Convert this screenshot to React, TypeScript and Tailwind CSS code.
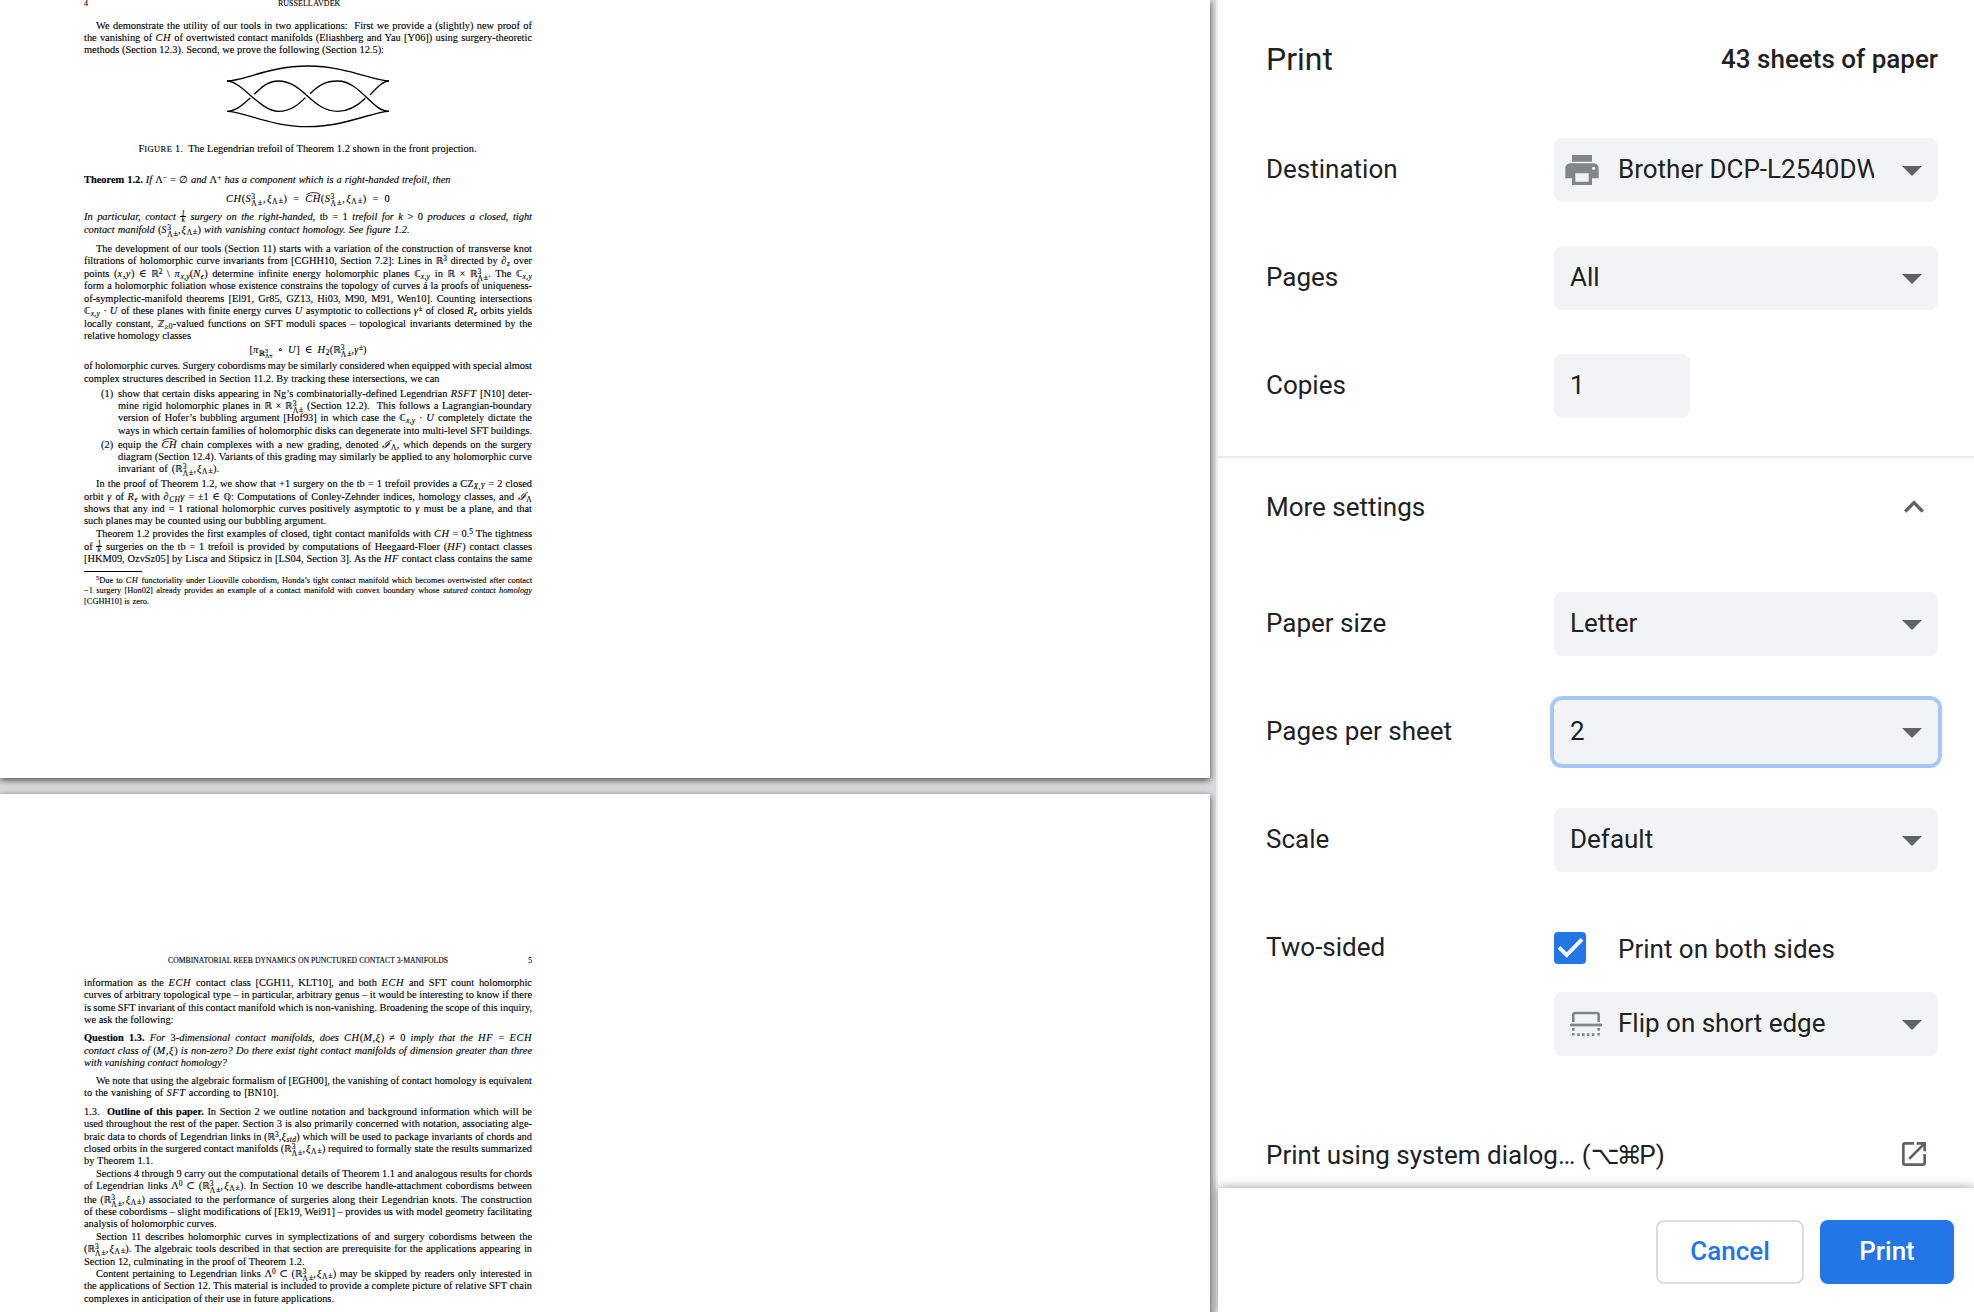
import React from 'react';
import { MdExpandLess, MdLaunch, MdPrint } from 'react-icons/md';

type Kids = { children?: React.ReactNode };

/* ---------- Typeset document ---------- */

// One typeset line, justified to its box; h is the distance to the next baseline.
function L({ children, h = 'h-[12px]', w = 'w-[448px]', c = '' }: Kids & { h?: string; w?: string; c?: string }) {
  return (
    <p className={`leading-[12px] whitespace-nowrap text-justify [text-align-last:justify] ${h} ${w} ${c}`}>{children}</p>
  );
}

const I = ({ children }: Kids) => <i className="tracking-[0.6px]">{children}</i>;
const R = ({ children }: Kids) => <span className="not-italic">{children}</span>;
const Sub = ({ children }: Kids) => (
  <span className="align-[-1.5px] text-[7.5px] leading-[6px] tracking-[0.3px]">{children}</span>
);
const Sup = ({ children }: Kids) => <span className="align-[3.5px] text-[7.5px] leading-[6px] not-italic">{children}</span>;
const BB = ({ children }: Kids) => <span className="font-['DejaVu_Sans'] text-[9.5px] leading-[9px] not-italic">{children}</span>;
const LamPm = () => (
  <>
    Λ<span className="ml-[0.7px] align-[1px] text-[8.5px] leading-[5px]">±</span>
  </>
);
// Superscript 3 set directly above a Λ± subscript.
const Stack = () => (
  <span className="inline-flex flex-col align-[3.5px] text-[7.5px] leading-[6px] not-italic">
    <span className="h-[6px]">3</span>
    <span className="h-[6px]">
      <LamPm />
    </span>
  </span>
);
const Frac = () => (
  <span className="inline-flex flex-col items-center align-[4px] text-[7.5px] leading-[6px]">
    <span className="border-b border-black px-px leading-[5px]">1</span>
    <i className="leading-[6px]">k</i>
  </span>
);
const XiL = () => (
  <>
    <I>ξ</I>
    <span className="align-[-1.5px] text-[7.5px] leading-[6px] not-italic">
      <LamPm />
    </span>
  </>
);
const RXi = () => (
  <R>
    (<BB>ℝ</BB>
    <Stack />,<span className="ml-px"><XiL /></span>)
  </R>
);
const SXi = () => (
  <R>
    (<I>S</I>
    <Stack />,<span className="ml-px"><XiL /></span>)
  </R>
);
const Hat = ({ children }: Kids) => (
  <span className="relative">
    <I>{children}</I>
    <svg className="absolute -top-[1px] left-[1px] h-[3px] w-[15px]" viewBox="0 0 15 3" fill="none">
      <path d="M0.5 2.6 Q7.5 -1.6 14.5 2.6" stroke="black" strokeWidth="0.8" />
    </svg>
  </span>
);
const Cxy = () => (
  <>
    <BB>ℂ</BB>
    <Sub>
      <i>x,y</i>
    </Sub>
  </>
);

function Trefoil() {
  return (
    <svg className="h-[65.3px] w-[164px]" viewBox="468 190 492 196" fill="none" stroke="black" strokeWidth="4">
      <path d="M471 244C520 244 600 199 714 199S910 244 957 244" />
      <path d="M471 335C520 335 600 381 714 381S910 335 957 335" />
      <path d="M471 244C515 244 570 335 625 335C665 335 690 310 706 294" />
      <path d="M471 335C500 335 520 312 541 295" />
      <path d="M553 284C575 262 595 244 625 244C700 244 725 335 803 335C845 335 870 312 886 296" />
      <path d="M720 282C745 258 765 244 803 244C870 244 905 335 957 335" />
      <path d="M900 286C925 260 940 244 957 244" />
    </svg>
  );
}

function PageFour() {
  return (
    <div className="-mt-[3px] flex flex-col">
      <div className="flex h-[23px] pt-px text-[8px]">
        <span className="w-[194px] leading-[12px]">4</span>
        <L w="w-[60px]">RUSSELL AVDEK</L>
      </div>
      <L c="pl-[12px]">We demonstrate the utility of our tools in two applications:&nbsp; First we provide a (slightly) new proof of</L>
      <L>the vanishing of <I>CH</I> of overtwisted contact manifolds (Eliashberg and Yau [Y06]) using surgery-theoretic</L>
      <L w="w-[300px]">methods (Section 12.3). Second, we prove the following (Section 12.5):</L>
      <div className="h-[87px] pt-[7px] pl-[142px]">
        <Trefoil />
      </div>
      <L h="h-[31px]" w="w-[338px]" c="ml-[54.5px]">
        F<span className="text-[8.5px] tracking-[0.4px]">IGURE</span> 1.&nbsp; The Legendrian trefoil of Theorem 1.2 shown in the front projection.
      </L>
      <L h="h-[19px]" w="w-[366.5px]" c="italic">
        <b className="not-italic">Theorem 1.2.</b> If <R>Λ<Sup>−</Sup> = ∅</R> and <R>Λ<Sup>+</Sup></R> has a component which is a right-handed trefoil, then
      </L>
      <L h="h-[18px]" w="w-[164px]" c="ml-[142px] tracking-[0.4px]">
        <I>CH</I><SXi /> = <Hat>CH</Hat><SXi /> = 0
      </L>
      <L h="h-[13px]" c="italic">
        In particular, contact <Frac /> surgery on the right-handed, <R>tb = 1</R> trefoil for k <R>&gt; 0</R> produces a closed, tight
      </L>
      <L h="h-[19px]" w="w-[325.5px]" c="italic">
        contact manifold <SXi /> with vanishing contact homology. See figure 1.2.
      </L>
      <L c="pl-[12px]">The development of our tools (Section 11) starts with a variation of the construction of transverse knot</L>
      <L h="h-[13px]">
        filtrations of holomorphic curve invariants from [CGHH10, Section 7.2]: Lines in <BB>ℝ</BB><Sup>3</Sup> directed by <I>∂</I><Sub><i>z</i></Sub> over
      </L>
      <L>
        points (<I>x,y</I>) ∈ <BB>ℝ</BB><Sup>2</Sup> \ <I>π</I><Sub><i>x,y</i></Sub>(<I>N</I><Sub><i>ϵ</i></Sub>) determine infinite energy holomorphic planes <Cxy /> in <BB>ℝ</BB> × <BB>ℝ</BB><Stack />. The <Cxy />
      </L>
      <L h="h-[13px]">form a holomorphic foliation whose existence constrains the topology of curves á la proofs of uniqueness-</L>
      <L>of-symplectic-manifold theorems [El91, Gr85, GZ13, Hi03, M90, M91, Wen10]. Counting intersections</L>
      <L h="h-[13px]">
        <Cxy /> · <I>U</I> of these planes with finite energy curves <I>U</I> asymptotic to collections <I>γ</I><Sup>±</Sup> of closed <I>R</I><Sub><i>ϵ</i></Sub> orbits yields
      </L>
      <L>
        locally constant, <BB>ℤ</BB><Sub>≥0</Sub>-valued functions on SFT moduli spaces – topological invariants determined by the
      </L>
      <L h="h-[14px]" w="w-[107px]">relative homology classes</L>
      <L h="h-[16px]" w="w-[117px]" c="ml-[165.5px]">
        [<I>π</I>
        <span className="align-[-3px] text-[7.5px] leading-[6px]">ℝ</span>
        <span className="inline-flex flex-col align-[0px] text-[6px] leading-[5px]"><span>3</span><span>Λ±</span></span> ∘ <I>U</I>] ∈ <I>H</I><Sub>2</Sub>(<BB>ℝ</BB><Stack />,<I>γ</I><Sup>±</Sup>)
      </L>
      <L h="h-[13px]">of holomorphic curves. Surgery cobordisms may be similarly considered when equipped with special almost</L>
      <L h="h-[15px]" w="w-[355.5px]">complex structures described in Section 11.2. By tracking these intersections, we can</L>
      <div className="flex">
        <span className="ml-[17px] w-[17px] leading-[12px]">(1)</span>
        <div>
          <L w="w-[414px]">show that certain disks appearing in Ng’s combinatorially-defined Legendrian <I>RSFT</I> [N10] deter-</L>
          <L w="w-[414px]">
            mine rigid holomorphic planes in <BB>ℝ</BB> × <BB>ℝ</BB><Stack /> (Section 12.2).&nbsp; This follows a Lagrangian-boundary
          </L>
          <L w="w-[414px]" h="h-[13px]">
            version of Hofer’s bubbling argument [Hof93] in which case the <Cxy /> · <I>U</I> completely dictate the
          </L>
          <L w="w-[414px]" h="h-[14px]">ways in which certain families of holomorphic disks can degenerate into multi-level SFT buildings.</L>
        </div>
      </div>
      <div className="flex">
        <span className="ml-[17px] w-[17px] leading-[12px]">(2)</span>
        <div>
          <L w="w-[414px]">
            equip the <Hat>CH</Hat> chain complexes with a new grading, denoted <I>ℐ</I><Sub>Λ</Sub>, which depends on the surgery
          </L>
          <L w="w-[414px]">diagram (Section 12.4). Variants of this grading may similarly be applied to any holomorphic curve</L>
          <L w="w-[101px]" h="h-[15px]">
            invariant of <RXi />.
          </L>
        </div>
      </div>
      <L h="h-[13px]" c="pl-[12px]">
        In the proof of Theorem 1.2, we show that +1 surgery on the tb = 1 trefoil provides a CZ<Sub><i>X,Y</i></Sub> = 2 closed
      </L>
      <L>
        orbit <I>γ</I> of <I>R</I><Sub><i>ϵ</i></Sub> with <I>∂</I><Sub><i>CH</i></Sub><I>γ</I> = ±1 ∈ <BB>ℚ</BB>: Computations of Conley-Zehnder indices, homology classes, and <I>ℐ</I><Sub>Λ</Sub>
      </L>
      <L>shows that any ind = 1 rational holomorphic curves positively asymptotic to <I>γ</I> must be a plane, and that</L>
      <L h="h-[13px]" w="w-[242px]">such planes may be counted using our bubbling argument.</L>
      <L h="h-[13px]" c="pl-[12px]">
        Theorem 1.2 provides the first examples of closed, tight contact manifolds with <I>CH</I> = 0.<Sup>5</Sup> The tightness
      </L>
      <L>
        of <Frac /> surgeries on the tb = 1 trefoil is provided by computations of Heegaard-Floer (<I>HF</I>) contact classes
      </L>
      <L>[HKM09, OzvSz05] by Lisca and Stipsicz in [LS04, Section 3]. As the <I>HF</I> contact class contains the same</L>
      <div className="mt-[6px] mb-[3px] h-px w-[58px] bg-black" />
      <div className="text-[8.4px]">
        <L h="h-[10px]" c="pl-[12px]">
          <span className="align-[3px] text-[6.5px] leading-[5px]">5</span>Due to <I>CH</I> functoriality under Liouville cobordism, Honda’s tight contact manifold which becomes overtwisted after contact
        </L>
        <L h="h-[11px]">
          −1 surgery [Hon02] already provides an example of a contact manifold with convex boundary whose <i>sutured contact homology</i>
        </L>
        <L w="w-[65px]">[CGHH10] is zero.</L>
      </div>
    </div>
  );
}

function PageFive() {
  return (
    <div className="flex flex-col pt-[160px]">
      <div className="flex h-[23px] justify-between pt-px pl-[84px] text-[7.7px]">
        <L w="w-[280px]">COMBINATORIAL REEB DYNAMICS ON PUNCTURED CONTACT 3-MANIFOLDS</L>
        <span className="leading-[12px]">5</span>
      </div>
      <L>information as the <I>ECH</I> contact class [CGH11, KLT10], and both <I>ECH</I> and SFT count holomorphic</L>
      <L h="h-[13px]">curves of arbitrary topological type – in particular, arbitrary genus – it would be interesting to know if there</L>
      <L>is some SFT invariant of this contact manifold which is non-vanishing. Broadening the scope of this inquiry,</L>
      <L h="h-[18px]" w="w-[89.5px]">we ask the following:</L>
      <L h="h-[13px]" c="italic">
        <b className="not-italic">Question 1.3.</b> For <R>3</R>-dimensional contact manifolds, does <I>CH</I><R>(</R><I>M,ξ</I><R>) ≠ 0</R> imply that the <I>HF</I> <R>=</R> <I>ECH</I>
      </L>
      <L c="italic">
        contact class of <R>(</R><I>M,ξ</I><R>)</R> is non-zero? Do there exist tight contact manifolds of dimension greater than three
      </L>
      <L h="h-[18px]" w="w-[143px]" c="italic">with vanishing contact homology?</L>
      <L c="pl-[12px]">We note that using the algebraic formalism of [EGH00], the vanishing of contact homology is equivalent</L>
      <L h="h-[19px]" w="w-[194.5px]">to the vanishing of <I>SFT</I> according to [BN10].</L>
      <L>1.3.&nbsp; <b>Outline of this paper.</b> In Section 2 we outline notation and background information which will be</L>
      <L h="h-[13px]">used throughout the rest of the paper. Section 3 is also primarily concerned with notation, associating alge-</L>
      <L>
        braic data to chords of Legendrian links in (<BB>ℝ</BB><Sup>3</Sup>,<I>ξ</I><Sub><i>std</i></Sub>) which will be used to package invariants of chords and
      </L>
      <L>closed orbits in the surgered contact manifolds <RXi /> required to formally state the results summarized</L>
      <L h="h-[13px]" w="w-[69px]">by Theorem 1.1.</L>
      <L c="pl-[12px]">Sections 4 through 9 carry out the computational details of Theorem 1.1 and analogous results for chords</L>
      <L h="h-[14px]">
        of Legendrian links Λ<Sup>0</Sup> ⊂ <RXi />. In Section 10 we describe handle-attachment cobordisms between
      </L>
      <L>the <RXi /> associated to the performance of surgeries along their Legendrian knots. The construction</L>
      <L>of these cobordisms – slight modifications of [Ek19, Wei91] – provides us with model geometry facilitating</L>
      <L h="h-[13px]" w="w-[132.5px]">analysis of holomorphic curves.</L>
      <L c="pl-[12px]">Section 11 describes holomorphic curves in symplectizations of and surgery cobordisms between the</L>
      <L h="h-[13px]">
        <RXi />. The algebraic tools described in that section are prerequisite for the applications appearing in
      </L>
      <L w="w-[220.5px]">Section 12, culminating in the proof of Theorem 1.2.</L>
      <L c="pl-[12px]">
        Content pertaining to Legendrian links Λ<Sup>0</Sup> ⊂ <RXi /> may be skipped by readers only interested in
      </L>
      <L h="h-[13px]">the applications of Section 12. This material is included to provide a complete picture of relative SFT chain</L>
      <L w="w-[250px]">complexes in anticipation of their use in future applications.</L>
    </div>
  );
}

/* ---------- Settings panel ---------- */

const Arrow = () => (
  <svg className="mt-[2px] h-[10px] w-[20px] shrink-0" viewBox="0 0 20 10">
    <path d="M0 0h20L10 10z" fill="#5f6368" />
  </svg>
);

function Select({ children, icon, focused = false }: Kids & { icon?: React.ReactNode; focused?: boolean }) {
  return (
    <div
      className={`flex h-16 w-[384px] items-center rounded-lg bg-[#f1f3f4] pr-4 ${focused ? 'shadow-[0_0_0_4px_#a6c8f6]' : ''}`}
    >
      {icon ? <div className="flex w-16 shrink-0">{icon}</div> : <div className="w-4 shrink-0" />}
      <span className="mr-4 h-16 flex-1 overflow-hidden leading-[62px] whitespace-nowrap">
        <span className={icon ? 'block w-[256px] overflow-hidden' : 'block'}>{children}</span>
      </span>
      <Arrow />
    </div>
  );
}

function Row({ label, children }: Kids & { label: string }) {
  return (
    <div className="flex h-16 items-start justify-between pr-9 pl-12">
      <span className="leading-[62px]">{label}</span>
      {children}
    </div>
  );
}

const FlipIcon = () => (
  <svg className="ml-4 h-8 w-8" viewBox="0 0 32 32" fill="none" stroke="#80868b">
    <path d="M3.3 14V7a2 2 0 0 1 2-2h21.4a2 2 0 0 1 2 2v7" strokeWidth="2.6" />
    <path d="M0 17h32" strokeWidth="2.7" />
    <path d="M3.3 20v2.7M28.7 20v2.7M3.3 25v2.6M28.7 25v2.6M7.2 26.6h2.6M12 26.6h2.6M16.8 26.6h2.6M21.8 26.6h2.6" strokeWidth="2.6" />
  </svg>
);

export default function App() {
  return (
    <div className="flex h-[1312px] w-[1974px] overflow-hidden bg-white font-['Roboto',sans-serif] text-[#202124]">
      <main className="flex w-[1216px] shrink-0 flex-col gap-4 overflow-hidden bg-[#dadce0] font-['Liberation_Serif','DejaVu_Serif',serif] text-[10.4px] text-black [-webkit-text-stroke:0.12px_black] [word-spacing:-0.6px]">
        <section className="h-[778px] w-[1210px] shrink-0 bg-white pl-[84px] shadow-[0_2px_7px_rgba(0,0,0,0.7)]">
          <PageFour />
        </section>
        <section className="h-[778px] w-[1210px] shrink-0 bg-white pl-[84px] shadow-[0_2px_7px_rgba(0,0,0,0.7)]">
          <div className="w-[448px]">
            <PageFive />
          </div>
        </section>
      </main>

      <aside className="flex w-[758px] shrink-0 flex-col border-l-2 border-[#e8eaed] bg-white text-[26px]">
        <header className="flex h-[118px] items-center justify-between pr-9 pl-12">
          <h1 className="text-[32px]">Print</h1>
          <span className="font-medium">43 sheets of paper</span>
        </header>

        <div className="flex h-[1070px] flex-col">
          <div className="mt-5 flex flex-col gap-11">
            <Row label="Destination">
              <Select icon={<MdPrint className="ml-2 h-10 w-10 text-[#80868b]" />}>Brother DCP-L2540DW</Select>
            </Row>
            <Row label="Pages">
              <Select>All</Select>
            </Row>
            <Row label="Copies">
              <div className="flex w-[384px]">
                <div className="h-16 w-[136px] rounded-lg bg-[#f1f3f4] pl-4 leading-[62px]">1</div>
              </div>
            </Row>
          </div>

          <div className="mt-[38px] h-[2px] bg-[#e8eaed]" />
          <div className="mt-[17px] flex h-16 items-center justify-between pr-10 pl-12">
            <span>More settings</span>
            <MdExpandLess className="h-10 w-10 text-[#5f6368]" />
          </div>

          <div className="mt-[53px] flex flex-col gap-11">
            <Row label="Paper size">
              <Select>Letter</Select>
            </Row>
            <Row label="Pages per sheet">
              <Select focused>2</Select>
            </Row>
            <Row label="Scale">
              <Select>Default</Select>
            </Row>
            <Row label="Two-sided">
              <div className="flex h-16 w-[384px] items-center">
                <div className="flex h-8 w-8 rounded bg-[#2376e5]">
                  <svg className="h-8 w-8" viewBox="0 0 32 32" fill="none" stroke="white" strokeWidth="3.8">
                    <path d="M5 15.3L12.7 23L28 7.3" />
                  </svg>
                </div>
                <span className="ml-8 pt-[2px]">Print on both sides</span>
              </div>
            </Row>
          </div>
          <div className="mt-3 flex justify-end pr-9">
            <Select icon={<FlipIcon />}>Flip on short edge</Select>
          </div>

          <div className="mt-[66px] flex h-16 items-center justify-between pr-11 pl-12">
            <span className="pt-[2px]">
              Print using system dialog… (<span className="font-['DejaVu_Sans'] text-[25px] leading-6 tracking-[-2.6px]">⌥⌘</span>P)
            </span>
            <MdLaunch className="h-8 w-8 text-[#5f6368]" />
          </div>
        </div>

        <footer className="flex h-[124px] justify-end gap-4 bg-white pt-8 pr-5 font-medium shadow-[0_0_10px_rgba(0,0,0,0.4)]">
          <button className="h-16 w-[148px] rounded-lg border-2 border-[#dadce0] pb-[2px] text-[#2376e5]">Cancel</button>
          <button className="h-16 w-[134px] rounded-lg bg-[#2376e5] pb-[2px] text-white">Print</button>
        </footer>
      </aside>
    </div>
  );
}
